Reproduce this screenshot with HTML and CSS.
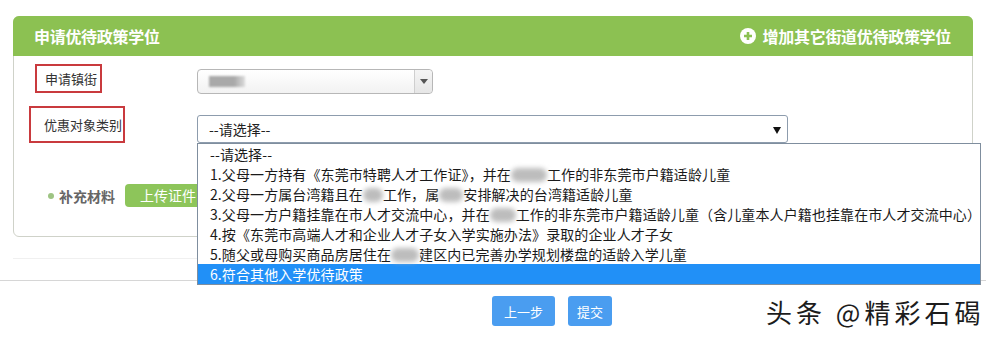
FILE: index.html
```html
<!DOCTYPE html>
<html lang="zh-CN">
<head>
<meta charset="utf-8">
<title>申请优待政策学位</title>
<link rel="stylesheet" href="styles.css">
</head>
<body>
<div class="page">
  <div class="panel">
    <div class="panel-header">
      <h2 class="panel-title">申请优待政策学位</h2>
      <a class="add-link">
        <svg class="add-icon" viewBox="0 0 16 16" width="16" height="16"><circle cx="8" cy="8" r="8" fill="#fff"/><path d="M8 4v8M4 8h8" stroke="#8cc152" stroke-width="2.6"/></svg>
        增加其它街道优待政策学位
      </a>
    </div>
    <div class="panel-body">
      <div class="row row-street">
        <div class="label-cell"><span class="mark">申请镇街</span></div>
        <div class="combo">
          <div class="combo-text"><span class="blur-gray"></span></div>
          <div class="combo-arrow"><svg viewBox="0 0 8 5" width="8" height="5"><path d="M0 0h8L4 5z" fill="#555"/></svg></div>
        </div>
      </div>
      <div class="row row-type">
        <div class="label-cell"><span class="mark">优惠对象类别</span></div>
        <div class="select-wrap">
          <div class="select">--请选择--<svg class="select-arrow" viewBox="0 0 8 7" width="8" height="7"><path d="M0 0h8L4 7z" fill="#111"/></svg></div>
          <ul class="dropdown">
            <li>--请选择--</li>
            <li>1.父母一方持有《东莞市特聘人才工作证》，并在<span class="blur b36"></span>工作的非东莞市户籍适龄儿童</li>
            <li>2.父母一方属台湾籍且在<span class="blur b20"></span>工作，属<span class="blur b24"></span>安排解决的台湾籍适龄儿童</li>
            <li>3.父母一方户籍挂靠在市人才交流中心，并在<span class="blur b26"></span>工作的非东莞市户籍适龄儿童（含儿童本人户籍也挂靠在市人才交流中心）</li>
            <li>4.按《东莞市高端人才和企业人才子女入学实施办法》录取的企业人才子女</li>
            <li>5.随父或母购买商品房居住在<span class="blur b28"></span>建区内已完善办学规划楼盘的适龄入学儿童</li>
            <li class="active">6.符合其他入学优待政策</li>
          </ul>
        </div>
      </div>
      <div class="row row-extra">
        <span class="dot"></span>
        <span class="extra-label">补充材料</span>
        <span class="upload-btn">上传证件</span>
      </div>
    </div>
  </div>
  <div class="faint-line"></div>
</div>
<div class="footer">
  <button class="btn btn-prev">上一步</button>
  <button class="btn btn-submit">提交</button>
</div>
<div class="watermark">头条 @精彩石碣</div>
</body>
</html>
```

FILE: styles.css
```css
* { box-sizing: border-box; }
body {
  margin: 0;
  width: 986px;
  height: 339px;
  overflow: hidden;
  position: relative;
  background: #fff;
  color: #333;
  font-family: "Noto Sans CJK SC", "Microsoft YaHei", sans-serif;
}
.page { padding: 16px 13px 0; }
.panel {
  border: 1px solid #cfd2c9;
  border-radius: 6px;
}
.panel-header {
  height: 40px;
  margin: -1px -1px 0;
  background: #8cc152;
  border-radius: 6px 6px 0 0;
  display: flex;
  align-items: center;
  justify-content: space-between;
  padding: 0 22px 0 21px;
  color: #fff;
}
.panel-title {
  margin: 0;
  font-size: 16px;
  font-weight: bold;
  letter-spacing: -0.3px;
}
.add-link {
  display: flex;
  align-items: center;
  gap: 7px;
  font-size: 16px;
  font-weight: bold;
  letter-spacing: -0.3px;
}
.add-icon { display: block; }
.panel-body {
  height: 180px;
  padding-top: 8px;
}
.row { display: flex; align-items: flex-start; }
.label-cell { width: 183px; flex: none; }
.mark {
  display: inline-block;
  border: 2px solid #c93a3e;
  font-size: 13px;
  color: #333;
}
.row-street .mark {
  margin-left: 21px;
  width: 67px;
  height: 29px;
  padding-left: 8px;
  line-height: 25px;
}
.combo {
  margin-top: 5px;
  width: 236px;
  height: 25px;
  border: 1px solid #b7b7b7;
  border-radius: 4px;
  background: linear-gradient(#fff, #f2f2f2);
  display: flex;
}
.combo-text { flex: 1; padding: 6px 0 0 11px; }
.blur-gray {
  display: block;
  width: 36px;
  height: 11px;
  background: linear-gradient(90deg, #a9a9a9 0, #a9a9a9 70%, #dcdcdc 100%);
  filter: blur(1px);
}
.combo-arrow {
  width: 18px;
  border-left: 1px solid #cfcfcf;
  background: linear-gradient(#f4f4f4, #e6e6e6);
  border-radius: 0 4px 4px 0;
  display: flex;
  align-items: center;
  justify-content: center;
}
.row-type { margin-top: 12px; }
.row-type .mark {
  margin-left: 15px;
  width: 96px;
  height: 37px;
  padding-left: 13px;
  line-height: 33px;
}
.select-wrap {
  position: relative;
  margin-top: 9px;
  width: 591px;
  height: 28px;
}
.select {
  height: 28px;
  border: 1px solid #8d9cad;
  border-radius: 3px;
  background: #fff;
  font-size: 14px;
  line-height: 26px;
  padding-left: 11px;
  color: #222;
  position: relative;
}
.select-arrow { position: absolute; right: 6px; top: 11px; }
.dropdown {
  position: absolute;
  top: 28px;
  left: 0;
  width: 784px;
  margin: 0;
  padding: 0;
  list-style: none;
  border: 1px solid #7f8e9e;
  background: #fff;
  z-index: 5;
}
.dropdown li {
  height: 20px;
  line-height: 20px;
  padding-left: 12px;
  font-size: 14px;
  letter-spacing: 0.1px;
  color: #1a1a1a;
  white-space: nowrap;
}
.dropdown li.active { background: #2190f7; color: #fff; }
.blur {
  display: inline-block;
  height: 14px;
  vertical-align: -2px;
  background: #bdbdbd;
  border-radius: 7px;
  filter: blur(2.5px);
}
.b20 { width: 20px; }
.b24 { width: 24px; }
.b26 { width: 26px; }
.b28 { width: 28px; }
.b36 { width: 36px; }
.row-extra {
  margin-top: 41px;
  align-items: center;
  padding-left: 34px;
}
.dot {
  width: 6px;
  height: 6px;
  border-radius: 50%;
  background: #9ec483;
}
.extra-label {
  margin-left: 5px;
  font-size: 14px;
  font-weight: bold;
  color: #666;
}
.upload-btn {
  margin-left: 10px;
  width: 86px;
  height: 23px;
  line-height: 23px;
  padding-left: 15px;
  border-radius: 4px;
  background: #8dc55a;
  color: #fff;
  font-size: 14px;
}
.faint-line {
  margin-top: 21px;
  height: 1px;
  background: #f0f0f0;
}
.footer {
  margin-top: 21px;
  border-top: 1px solid #d6d6d6;
  padding: 15px 0 0 492px;
  display: flex;
  gap: 13px;
}
.btn {
  height: 30px;
  border: 0;
  border-radius: 3px;
  background: #4a9df0;
  color: #fff;
  font-size: 13px;
  font-family: inherit;
  padding: 0;
}
.btn-prev { width: 63px; }
.btn-submit { width: 44px; }
.watermark {
  position: absolute;
  left: 766px;
  top: 293px;
  font-size: 26px;
  letter-spacing: 4px;
  color: #1c1c1c;
  white-space: nowrap;
  text-shadow: 0 0 2px #fff, 0 0 2px #fff;
}
```
